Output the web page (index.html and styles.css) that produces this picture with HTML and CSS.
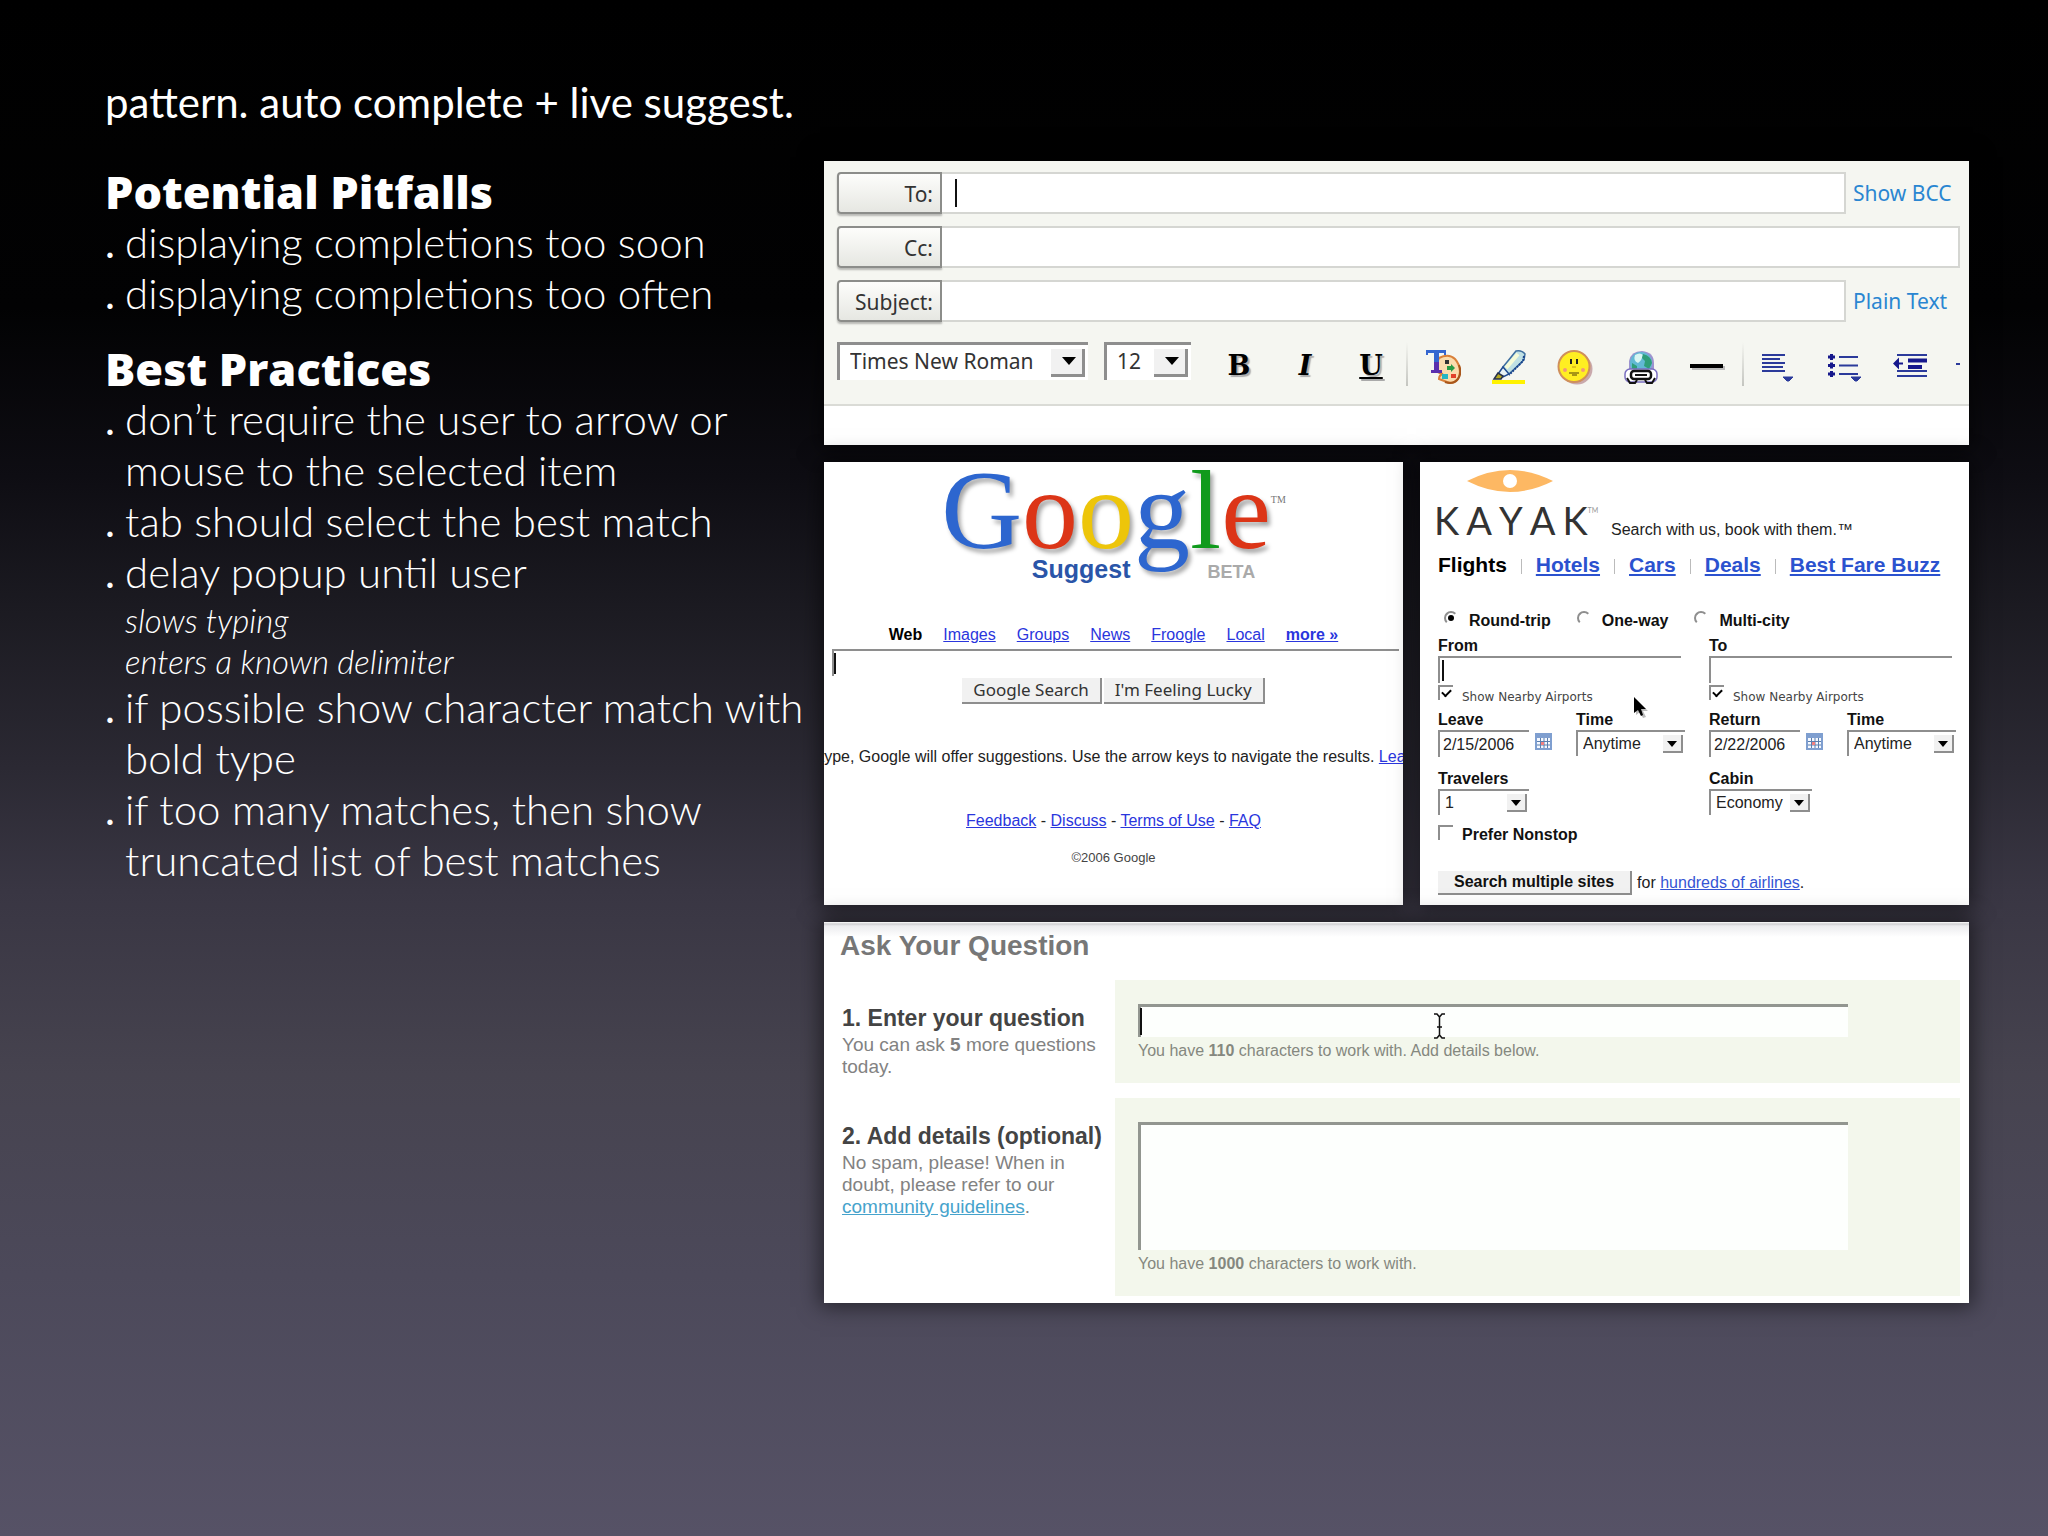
FILE: index.html
```html
<!DOCTYPE html>
<html lang="en">
  <head>
    <meta charset="UTF-8" />
    <meta name="viewport" content="width=device-width, initial-scale=1.0" />
    <title>pattern. auto complete + live suggest.</title>
    <link rel="stylesheet" href="styles.css">
  </head>
  <body>
    <h1 class="slide-title">pattern. auto complete + live suggest.</h1>

    <div class="slide">
      <div class="notes">
        <h2>Potential Pitfalls</h2>
        <ul>
          <li>displaying completions too soon</li>
          <li>displaying completions too often</li>
        </ul>
        <h2>Best Practices</h2>
        <ul>
          <li>don’t require the user to arrow or<br>mouse to the selected item</li>
          <li>tab should select the best match</li>
          <li>delay popup until user
            <div class="sub-note">slows typing<br>enters a known delimiter</div>
          </li>
          <li>if possible show character match with<br>bold type</li>
          <li>if too many matches, then show<br>truncated list of best matches</li>
        </ul>
      </div>

      <div class="panels">
        <!-- mail compose -->
        <form class="panel mail">
          <div class="mail-rows">
            <div class="mail-row">
              <label for="mail-to">To:</label>
              <div class="mail-field">
                <input type="text" id="mail-to">
                <span class="caret"></span>
              </div>
              <a href="#">Show BCC</a>
            </div>
            <div class="mail-row">
              <label for="mail-cc">Cc:</label>
              <div class="mail-field"><input type="text" id="mail-cc"></div>
            </div>
            <div class="mail-row">
              <label for="mail-subject">Subject:</label>
              <div class="mail-field"><input type="text" id="mail-subject"></div>
              <a href="#">Plain Text</a>
            </div>
          </div>
          <div class="toolbar">
            <span class="select font-name">
              <select aria-label="Font"><option>Times New Roman</option></select>
            </span>
            <span class="select font-size">
              <select aria-label="Size"><option>12</option></select>
            </span>
            <button type="button" class="tool letter">B</button>
            <button type="button" class="tool letter italic">I</button>
            <button type="button" class="tool letter underline">U</button>
            <span class="tool-sep"></span>
            <button type="button" class="tool" aria-label="Text color">
              <svg width="36" height="36" viewBox="0 0 36 36">
                <path d="M14 9 Q24 4 30 10 Q37 18 34 28 Q30 36 22 33 L14 30 Q14 26 18 25 Q12 24 10 20Z" fill="#fbdcae" stroke="#d9803a" stroke-width="2"/>
                <path d="M34 16 Q37 24 33 30 Q28 36 20 33" fill="none" stroke="#a8571c" stroke-width="2"/>
                <rect x="20" y="11" width="4" height="4" fill="#333"/>
                <path d="M22 17h4v-2l4 4-4 4v-2h-4z" fill="#2a9c46"/>
                <rect x="17" y="25" width="6" height="5" fill="#27b5c4"/>
                <rect x="26" y="25" width="5" height="4" fill="#e2412a"/>
                <path d="M1 1h20v5h-2V4h-5v17h3v3H6v-3h3V4H3v2H1z" fill="#3566d0"/>
                <path d="M9 13h5v8h3v3H6v-3h3z" fill="#5a2fae"/>
              </svg>
            </button>
            <button type="button" class="tool" aria-label="Highlight">
              <svg width="36" height="36" viewBox="0 0 36 36">
                <rect x="1" y="31" width="33" height="4" fill="#fff200"/>
                <path d="M12 18 L25 2 Q31 1 34 5 L33 11 L18 25 L12 25Z" fill="#bfe0e4" stroke="#3f6f9f" stroke-width="1.5"/>
                <path d="M15 19 L27 5" stroke="#f6fbd8" stroke-width="4"/>
                <path d="M33 7 L32 12 L18 26" fill="none" stroke="#15418c" stroke-width="2" stroke-dasharray="2 1"/>
                <path d="M12 18 L7 25 L12 28 L18 25Z" fill="#e8f2f4" stroke="#1f4a90" stroke-width="1.5"/>
                <path d="M7 24 L3 30 H10 L12 27Z" fill="#b5a820" stroke="#26304a" stroke-width="1.5"/>
              </svg>
            </button>
            <button type="button" class="tool" aria-label="Emoticons">
              <svg width="36" height="36" viewBox="0 0 36 36">
                <circle cx="20" cy="20" r="15.5" fill="#c9a9ac"/>
                <circle cx="17" cy="17.5" r="15.5" fill="#ffee22" stroke="#cf8f5c" stroke-width="2"/>
                <path d="M14 10v5M20 10v5" stroke="#222" stroke-width="2"/>
                <path d="M12 24h10M15 26h5" stroke="#8a7a12" stroke-width="1.5"/>
                <path d="M15 18h4" stroke="#d8b41c" stroke-width="1.5"/>
                <circle cx="8" cy="21" r="2" fill="#f29a74"/>
                <circle cx="26" cy="21" r="2" fill="#f29a74"/>
              </svg>
            </button>
            <button type="button" class="tool" aria-label="Link">
              <svg width="36" height="36" viewBox="0 0 36 36">
                <path d="M6 21 V12 Q8 2 19 2 Q31 3 31 14 V21Z" fill="#9c93cf"/>
                <circle cx="18" cy="14" r="11" fill="#62b9d4"/>
                <path d="M12 6q5-3 8 0q-1 5-5 8q-5-2-3-8z" fill="#d8f6f2"/>
                <path d="M20 5q8 2 9 9l-3 6-5-3 1-5-3-3zM9 14l5 3v6H9z" fill="#2f9e78"/>
                <rect x="2" y="20" width="32" height="13" rx="5" fill="#fff" stroke="#7a6fc0" stroke-width="1.5"/>
                <rect x="8" y="22" width="20" height="8" rx="3" fill="none" stroke="#111" stroke-width="2.5"/>
                <path d="M12 26h12" stroke="#111" stroke-width="2"/>
                <path d="M4 29l3 5h5l2-3M32 29l-3 5h-5l-2-3" fill="none" stroke="#111" stroke-width="2"/>
              </svg>
            </button>
            <button type="button" class="tool" aria-label="Horizontal line">
              <svg width="36" height="36" viewBox="0 0 36 36">
                <rect x="3" y="17" width="33" height="4" fill="#bbb"/>
                <rect x="1" y="15" width="33" height="4" fill="#000"/>
              </svg>
            </button>
            <span class="tool-sep"></span>
            <button type="button" class="tool" aria-label="Align">
              <svg width="36" height="36" viewBox="0 0 36 36">
                <path d="M1 6h23M1 10h18M1 14h23M1 18h21M1 22h23" stroke="#2b3a9b" stroke-width="2"/>
                <path d="M22 28h10l-4 4h-2z" fill="#2b3a9b" stroke="#2b3a9b"/>
              </svg>
            </button>
            <button type="button" class="tool" aria-label="Bullets">
              <svg width="36" height="36" viewBox="0 0 36 36">
                <path d="M12 8h19M12 16.5h19M12 25h19" stroke="#2b3a9b" stroke-width="2"/>
                <path d="M1 8h7M4.5 5v6M1 16.5h7M4.5 13.5v6M1 25h7M4.5 22v6" stroke="#16188c" stroke-width="3"/>
                <path d="M24 28h10l-4 4h-2z" fill="#2b3a9b" stroke="#2b3a9b"/>
              </svg>
            </button>
            <button type="button" class="tool" aria-label="Outdent">
              <svg width="36" height="36" viewBox="0 0 36 36">
                <path d="M4 6h30M4 22h30M4 27h30" stroke="#2b3a9b" stroke-width="2"/>
                <path d="M15 11.5h19M15 18h14" stroke="#16188c" stroke-width="4"/>
                <path d="M0 14.5l6-6v5h4v2H6v5z" fill="#16188c"/>
              </svg>
            </button>
            <span class="tool-more"></span>
          </div>
          <div class="mail-body"></div>
        </form>

        <div class="panel-pair">
          <!-- google suggest -->
          <form class="panel google">
            <div class="google-logo" aria-label="Google">
              <span class="blue">G</span><span class="red">o</span><span class="yellow">o</span><span class="blue">g</span><span class="green">l</span><span class="red">e</span><small>TM</small>
            </div>
            <div class="google-sub"><strong>Suggest</strong><em>BETA</em></div>
            <div class="google-nav">
              <b>Web</b>
              <a href="#">Images</a>
              <a href="#">Groups</a>
              <a href="#">News</a>
              <a href="#">Froogle</a>
              <a href="#">Local</a>
              <a href="#"><b>more »</b></a>
            </div>
            <div class="google-field">
              <input type="text" aria-label="Search">
              <span class="caret"></span>
            </div>
            <div class="google-buttons">
              <button type="button">Google Search</button>
              <button type="button">I'm Feeling Lucky</button>
            </div>
            <div class="google-hint">
              <p>As you type, Google will offer suggestions. Use the arrow keys to navigate the results. <a href="#">Learn more</a></p>
            </div>
            <p class="google-links">
              <a href="#">Feedback</a> - <a href="#">Discuss</a> - <a href="#">Terms of Use</a> - <a href="#">FAQ</a>
            </p>
            <p class="google-copy">©2006 Google</p>
          </form>

          <!-- kayak -->
          <form class="panel kayak">
            <div class="kayak-brand">
              <div class="kayak-logo">
                <svg width="86" height="22" viewBox="0 0 86 22">
                  <path d="M0 11 Q43 -11 86 11 Q43 33 0 11Z" fill="#fdb863"/>
                  <circle cx="43" cy="11" r="7" fill="#fff"/>
                </svg>
                <div class="kayak-word"><span>K</span><span>A</span><span>Y</span><span>A</span><span>K</span><small>TM</small></div>
              </div>
              <p>Search with us, book with them.™</p>
            </div>
            <div class="kayak-tabs">
              <b>Flights</b>
              <i></i>
              <a href="#">Hotels</a>
              <i></i>
              <a href="#">Cars</a>
              <i></i>
              <a href="#">Deals</a>
              <i></i>
              <a href="#">Best Fare Buzz</a>
            </div>
            <div class="kayak-trip">
              <label><input type="radio" name="trip" checked>Round-trip</label>
              <label><input type="radio" name="trip">One-way</label>
              <label><input type="radio" name="trip">Multi-city</label>
            </div>
            <div class="kayak-grid">
              <div class="place">
                <label for="from">From</label>
                <div class="place-field">
                  <input type="text" id="from">
                  <span class="caret"></span>
                </div>
                <label class="nearby"><input type="checkbox" checked>Show Nearby Airports</label>
              </div>
              <div class="place">
                <label for="to">To</label>
                <div class="place-field"><input type="text" id="to"></div>
                <label class="nearby"><input type="checkbox" checked>Show Nearby Airports</label>
              </div>
              <div class="when">
                <div class="date">
                  <label for="leave">Leave</label>
                  <div class="date-field">
                    <input type="text" id="leave" value="2/15/2006">
                    <svg width="17" height="17" viewBox="0 0 17 17">
                      <rect x="0" y="0" width="17" height="17" fill="#7f9fd0"/>
                      <path d="M2 5h13v10H2z" fill="#f4f8ff"/>
                      <path d="M2 8.5h13M2 12h13M5.5 5v10M9 5v10M12.5 5v10" stroke="#5b7fae"/>
                      <path d="M6 9h3v3H6z" fill="#f08080"/>
                    </svg>
                  </div>
                </div>
                <div class="time">
                  <label for="leave-time">Time</label>
                  <span class="select"><select id="leave-time"><option>Anytime</option></select></span>
                </div>
              </div>
              <div class="when">
                <div class="date">
                  <label for="return">Return</label>
                  <div class="date-field">
                    <input type="text" id="return" value="2/22/2006">
                    <svg width="17" height="17" viewBox="0 0 17 17">
                      <rect x="0" y="0" width="17" height="17" fill="#7f9fd0"/>
                      <path d="M2 5h13v10H2z" fill="#f4f8ff"/>
                      <path d="M2 8.5h13M2 12h13M5.5 5v10M9 5v10M12.5 5v10" stroke="#5b7fae"/>
                      <path d="M6 9h3v3H6z" fill="#f08080"/>
                    </svg>
                  </div>
                </div>
                <div class="time">
                  <label for="return-time">Time</label>
                  <span class="select"><select id="return-time"><option>Anytime</option></select></span>
                </div>
              </div>
              <div class="option">
                <label for="travelers">Travelers</label>
                <span class="select travelers"><select id="travelers"><option>1</option></select></span>
              </div>
              <div class="option">
                <label for="cabin">Cabin</label>
                <span class="select cabin"><select id="cabin"><option>Economy</option></select></span>
              </div>
            </div>
            <label class="nonstop"><input type="checkbox">Prefer Nonstop</label>
            <div class="kayak-submit">
              <button type="button">Search multiple sites</button>
              <span>for <a href="#">hundreds of airlines</a>.</span>
            </div>
            <svg class="pointer" width="16" height="22" viewBox="0 0 16 22">
              <path d="M3 2v16l4-3 3 6 3-1-3-6h5z" fill="#bbb"/>
              <path d="M1 0v16l4-3 3 6 2-1-2-6h5z" fill="#000"/>
            </svg>
          </form>
        </div>

        <!-- ask a question -->
        <form class="panel ask">
          <h3>Ask Your Question</h3>
          <div class="ask-row">
            <div class="ask-label">
              <label for="question">1. Enter your question</label>
              <p>You can ask <b>5</b> more questions today.</p>
            </div>
            <div class="ask-box">
              <div class="ask-field">
                <input type="text" id="question">
                <span class="caret"></span>
                <svg class="ibeam" width="13" height="26" viewBox="0 0 13 26">
                  <path d="M1 1h3l2.5 3 2.5-3h3M6.5 4v18M1 25h3l2.5-3 2.5 3h3M4 14h5" fill="none" stroke="#111" stroke-width="1.5"/>
                </svg>
              </div>
              <p>You have <b>110</b> characters to work with. Add details below.</p>
            </div>
          </div>
          <div class="ask-row">
            <div class="ask-label">
              <label for="details">2. Add details (optional)</label>
              <p>No spam, please! When in doubt, please refer to our <a href="#">community guidelines</a>.</p>
            </div>
            <div class="ask-box">
              <div class="ask-field"><textarea id="details"></textarea></div>
              <p>You have <b>1000</b> characters to work with.</p>
            </div>
          </div>
        </form>
      </div>
    </div>
  </body>
</html>
```

FILE: styles.css
```css
* {
  margin: 0;
  padding: 0;
  box-sizing: border-box;
}

body {
  min-height: 100vh;
  padding: 76px 79px 0 105px;
  font-family: "Liberation Sans", Arial, sans-serif;
  background: linear-gradient(#000 0%, #020203 20%, #0e0d13 31%, #1c1b22 40%, #2b2933 50%, #393643 58%, #46434f 70%, #4c495a 83%, #565266 100%);
}

input,
select,
textarea,
button {
  appearance: none;
  font: inherit;
  color: inherit;
  border: none;
  border-radius: 0;
  background: none;
  outline: none;
}

svg {
  display: block;
}

/* slide text */

.slide-title {
  font-family: Lato, sans-serif;
  font-size: 42px;
  font-weight: 400;
  line-height: 52px;
  color: #fff;
}

.slide {
  display: grid;
  grid-template-columns: 719px minmax(0, 1fr);
  margin-top: 33px;
}

.notes {
  padding-top: 5px;
  font-family: Lato, sans-serif;
  font-size: 42px;
  font-weight: 300;
  line-height: 51px;
  color: #fff;
  white-space: nowrap;
}

.notes h2 {
  font-family: "Open Sans", sans-serif;
  font-size: 45px;
  font-weight: 800;
}

.notes ul {
  list-style: none;
  margin-bottom: 24px;
}

.notes li {
  position: relative;
  padding-left: 20px;
}

.notes li::before {
  content: ".";
  position: absolute;
  left: 0;
  font-weight: 400;
}

.sub-note {
  padding-top: 2px;
  font-size: 33px;
  font-style: italic;
  line-height: 41px;
}

/* panels */

.panels {
  display: flex;
  flex-direction: column;
  gap: 17px;
}

.panel {
  position: relative;
  background: #fff;
  box-shadow: 0 0 20px 4px rgba(0, 0, 0, 0.5);
}

.panel-pair {
  display: grid;
  grid-template-columns: minmax(0, 579fr) minmax(0, 549fr);
  gap: 17px;
}

.caret {
  position: absolute;
  left: 4px;
  top: 4px;
  bottom: 2px;
  width: 2px;
  background: #111;
}

.select {
  position: relative;
  display: block;
  border-top: 3px solid #8e8e8e;
  border-left: 3px solid #8e8e8e;
  background: #fff;
}

.select select {
  display: block;
  width: 100%;
  height: 100%;
}

/* drop-down button and its arrow */
.select::before {
  content: "";
  position: absolute;
  top: 3px;
  right: 2px;
  bottom: 3px;
  width: 18px;
  background: #f1f1f1;
  border-right: 2px solid #8e8e8e;
  border-bottom: 2px solid #8e8e8e;
  pointer-events: none;
}

.select::after {
  content: "";
  position: absolute;
  top: 9px;
  right: 8px;
  border: 5px solid transparent;
  border-top: 6px solid #000;
  border-bottom: none;
  pointer-events: none;
}

/* mail */

.mail {
  font-family: "Noto Sans", sans-serif;
  font-size: 21px;
  color: #333;
  background: #f5f6f1;
}

.mail-rows {
  display: flex;
  flex-direction: column;
  gap: 12px;
  padding: 11px 9px 0 13px;
}

.mail-row {
  display: flex;
  height: 42px;
  line-height: 42px;
}

.mail-row label {
  width: 105px;
  padding-right: 7px;
  text-align: right;
  line-height: 40px;
  border: 2px solid #8c8d8a;
  border-radius: 4px 0 0 4px;
  background: linear-gradient(#fdfdfb, #e6e7e2);
  box-shadow: 0 2px 2px rgba(0, 0, 0, 0.25);
}

.mail-field {
  position: relative;
  flex: 1;
}

.mail-field input {
  width: 100%;
  height: 42px;
  padding-left: 12px;
  background: #fff;
  border: 2px solid #d5d6d2;
  border-left: none;
}

.mail-field .caret {
  left: 13px;
  top: 7px;
  bottom: 7px;
}

.mail-row a {
  width: 114px;
  padding-left: 7px;
  color: #2a86d1;
  text-decoration: none;
  white-space: nowrap;
}

.toolbar {
  display: flex;
  height: 84px;
  padding: 20px 9px 0 13px;
  border-bottom: 2px solid #dadbd6;
}

.toolbar .select {
  height: 38px;
}

.toolbar .select select {
  padding: 0 0 3px 10px;
}

.toolbar .select::before {
  top: 4px;
  right: 3px;
  width: 31px;
  border-width: 3px;
}

.toolbar .select::after {
  top: 12px;
  right: 12px;
  border-width: 8px 7px 0;
}

.font-name {
  width: 251px;
}

.font-size {
  width: 87px;
  margin: 0 15px 0 16px;
}

.tool {
  display: flex;
  justify-content: center;
  width: 66px;
  height: 36px;
  margin-top: 7px;
}

.tool.letter {
  font-family: "DejaVu Serif", serif;
  font-size: 27px;
  font-weight: 700;
  line-height: 34px;
  color: #000;
  text-shadow: 2px 2px 1px #aaa;
}

.tool.italic {
  font-style: italic;
}

.tool.underline {
  text-decoration: underline;
}

.tool-sep {
  width: 2px;
  height: 44px;
  margin: 0 2px;
  background: linear-gradient(#f5f6f1, #c4c5c0);
}

.tool-more {
  width: 4px;
  height: 2px;
  margin: 21px 0 0 auto;
  background: #2b3a9b;
}

.mail-body {
  height: 39px;
  background: #fff;
}

/* google suggest */

.google {
  font-size: 16px;
  line-height: 20px;
  color: #222;
  text-align: center;
}

.google a {
  color: #2a36dd;
}

.google-logo {
  display: flex;
  justify-content: center;
  font-family: "Liberation Serif", serif;
  font-size: 112px;
  line-height: 96px;
  text-shadow: 3px 4px 4px rgba(0, 0, 0, 0.35);
}

.google-logo small {
  padding-top: 32px;
  font-size: 10px;
  line-height: 12px;
  color: #777;
  text-shadow: none;
}

.blue {
  color: #2d66cf;
}

.red {
  color: #dc3517;
}

.yellow {
  color: #edc50a;
}

.green {
  color: #109a1c;
}

.google-sub {
  display: flex;
  justify-content: center;
  align-items: baseline;
  gap: 77px;
  margin-top: -3px;
  padding-left: 60px;
  line-height: 28px;
}

.google-sub strong {
  font-size: 25px;
  color: #2a55a8;
}

.google-sub em {
  font-size: 18px;
  font-style: normal;
  font-weight: 700;
  color: #aaa;
}

.google-nav {
  display: flex;
  justify-content: center;
  gap: 21px;
  margin-top: 39px;
}

.google-nav > b {
  color: #000;
}

.google-field {
  position: relative;
  margin: 4px 4px 0 8px;
}

.google-field input {
  display: block;
  width: 100%;
  height: 27px;
  padding-left: 4px;
  border-top: 2px solid #8e8e8e;
  border-left: 2px solid #8e8e8e;
}

.google-field .caret {
  left: 2px;
}

.google-buttons {
  display: flex;
  justify-content: center;
  gap: 2px;
  margin-top: 2px;
}

.google-buttons button {
  height: 26px;
  padding: 0 11px;
  font-family: "Noto Sans", sans-serif;
  font-size: 17px;
  line-height: 24px;
  color: #333;
  background: #f1f1f1;
  border-right: 2px solid #8e8e8e;
  border-bottom: 2px solid #8e8e8e;
}

.google-hint {
  display: flex;
  justify-content: center;
  margin-top: 43px;
  overflow: hidden;
  white-space: nowrap;
}

.google-links {
  margin-top: 44px;
}

.google-copy {
  margin-top: 19px;
  font-size: 13px;
  line-height: 16px;
  color: #444;
}

/* kayak */

.kayak {
  padding: 8px 0 10px 18px;
  font-size: 16px;
  line-height: 20px;
  color: #222;
}

.kayak label {
  display: block;
  font-weight: 700;
  color: #111;
}

.kayak-brand {
  display: flex;
  align-items: flex-end;
}

.kayak-logo {
  width: 173px;
}

.kayak-logo svg {
  margin-left: 29px;
}

.kayak-word {
  display: flex;
  gap: 7px;
  margin: 5px 0 0 -4px;
  font-family: Lato, sans-serif;
  font-size: 38px;
  line-height: 46px;
  color: #333;
}

.kayak-word small {
  margin-left: -7px;
  font-size: 7px;
  line-height: 26px;
  color: #999;
}

.kayak-brand p {
  margin-bottom: 3px;
}

.kayak-tabs {
  display: flex;
  align-items: center;
  gap: 14px;
  margin-top: 10px;
  font-size: 21px;
  font-weight: 700;
  line-height: 24px;
}

.kayak-tabs b {
  color: #000;
}

.kayak-tabs a {
  color: #2b52cf;
}

.kayak-tabs i {
  width: 1px;
  height: 15px;
  margin-top: 3px;
  background: #bbb;
}

.kayak-trip {
  display: flex;
  gap: 26px;
  margin-top: 34px;
  padding-left: 6px;
}

.kayak-trip label {
  display: flex;
  align-items: flex-start;
  gap: 11px;
}

.kayak input[type="radio"] {
  display: grid;
  place-items: center;
  width: 14px;
  height: 14px;
  border: 2px solid transparent;
  border-top-color: #8e8e8e;
  border-left-color: #8e8e8e;
  border-radius: 50%;
}

.kayak input[type="radio"]:checked::after {
  content: "";
  width: 6px;
  height: 6px;
  border-radius: 50%;
  background: #000;
}

.kayak input[type="checkbox"] {
  width: 15px;
  height: 15px;
  border-top: 2px solid #8e8e8e;
  border-left: 2px solid #8e8e8e;
}

.kayak input[type="checkbox"]:checked::after {
  content: "";
  display: block;
  width: 7px;
  height: 4px;
  margin: 2px 0 0 2px;
  border-left: 2px solid #000;
  border-bottom: 2px solid #000;
  transform: rotate(-45deg);
}

.kayak-grid {
  display: grid;
  grid-template-columns: 271px 1fr;
  margin-top: 5px;
}

.place-field {
  position: relative;
  width: 243px;
  margin-bottom: 2px;
}

.place-field input,
.date-field input {
  display: block;
  width: 100%;
  height: 27px;
  padding-left: 3px;
  border-top: 2px solid #8e8e8e;
  border-left: 2px solid #8e8e8e;
}

.kayak .nearby {
  display: flex;
  gap: 9px;
  height: 21px;
  font-family: "DejaVu Sans", sans-serif;
  font-size: 12px;
  font-weight: 400;
  line-height: 24px;
  color: #444;
}

.when {
  display: flex;
  margin-top: 4px;
}

.date {
  width: 138px;
}

.date-field {
  display: flex;
  align-items: flex-start;
  gap: 6px;
}

.date-field input {
  width: 91px;
}

.date-field svg {
  margin-top: 3px;
}

.kayak .select {
  width: 109px;
  height: 26px;
  border-width: 2px;
}

.kayak .select select {
  padding-left: 5px;
}

.option {
  margin-top: 12px;
}

.kayak .select.travelers {
  width: 91px;
}

.kayak .select.cabin {
  width: 103px;
}

.kayak .nonstop {
  display: flex;
  gap: 9px;
  margin-top: 10px;
}

.kayak-submit {
  display: flex;
  align-items: center;
  gap: 5px;
  margin-top: 26px;
}

.kayak-submit button {
  height: 24px;
  padding: 0 16px;
  font-weight: 700;
  line-height: 22px;
  color: #111;
  background: #f1f1f1;
  border-right: 2px solid #8e8e8e;
  border-bottom: 2px solid #8e8e8e;
}

.kayak-submit a {
  color: #3555d4;
}

.pointer {
  position: absolute;
  left: 213px;
  top: 235px;
}

/* ask */

.ask {
  padding: 8px 9px 7px 18px;
  background: linear-gradient(#fff 0, #cfcfd2 2px, #ececef 4px, #fff 15px);
}

.ask h3 {
  font-size: 28px;
  line-height: 32px;
  color: #777;
  margin: 0 0 18px -2px;
}

.ask-row {
  display: grid;
  grid-template-columns: 273px 1fr;
}

.ask-row + .ask-row {
  margin-top: 15px;
}

.ask-label {
  padding-top: 25px;
}

.ask-label label {
  display: block;
  font-size: 23px;
  font-weight: 700;
  line-height: 26px;
  color: #444;
  white-space: nowrap;
}

.ask-label p {
  margin-top: 3px;
  font-size: 19px;
  line-height: 22px;
  color: #828282;
}

.ask-label a {
  color: #46a3cc;
}

.ask-box {
  padding: 24px 112px 22px 23px;
  background: #f3f7ec;
}

.ask-field {
  position: relative;
}

.ask-field input,
.ask-field textarea {
  display: block;
  width: 100%;
  height: 33px;
  padding-left: 4px;
  background: #fdfffd;
  border-top: 3px solid #929690;
  border-left: 3px solid #929690;
  resize: none;
}

.ask-field textarea {
  height: 128px;
}

.ask-field .caret {
  left: 2px;
}

.ask-box p {
  margin-top: 4px;
  font-size: 16px;
  line-height: 20px;
  color: #85887f;
}

.ibeam {
  position: absolute;
  left: 295px;
  top: 9px;
}
```
